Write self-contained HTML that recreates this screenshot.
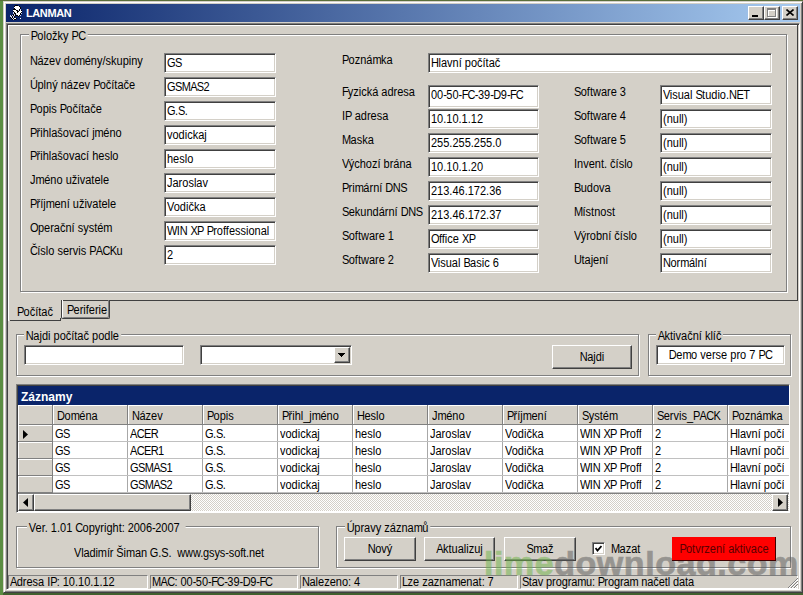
<!DOCTYPE html><html><head><meta charset="utf-8"><style>
html,body{margin:0;padding:0}
body{width:803px;height:595px;position:relative;overflow:hidden;background:#5B8D42;font-family:"Liberation Sans",sans-serif;font-size:11px;color:#000}
body div{position:absolute;box-sizing:border-box}
.t{white-space:nowrap;line-height:13px;height:13px;font-size:12px;transform:scaleX(0.917);transform-origin:0 0}
.tc{transform-origin:50% 0}
.sk{border:1px solid;border-color:#808080 #fff #fff #808080;box-shadow:inset 1px 1px #404040,inset -1px -1px #D4D0C8}
.rs{border:1px solid;border-color:#fff #404040 #404040 #fff;box-shadow:inset -1px -1px #808080}
.gb{border:1px solid #808080;box-shadow:inset 1px 1px #fff,1px 1px #fff}
.gc{background:#D4D0C8}
.b{font-weight:bold}
</style></head><body>
<div style="left:0px;top:0px;width:803px;height:1px;background:#5a6e3a"></div>
<div style="left:3px;top:1px;width:800px;height:592px;background:#D4D0C8;border:1px solid;border-color:#D4D0C8 #404040 #404040 #D4D0C8;box-shadow:inset 1px 1px #fff,inset -1px -1px #808080"></div>
<div style="left:3px;top:593px;width:800px;height:2px;background:#41602f"></div>
<div style="left:6px;top:4px;width:794px;height:18px;background:linear-gradient(to right,#0A246A,#A6CAF0)"></div>
<div class="t" style="left:26px;top:7px;color:#fff;font-weight:bold;letter-spacing:-0.4px;font-size:11px;transform:none">LANMAN</div>
<div class="rs" style="left:748px;top:6px;width:16px;height:14px;background:#D4D0C8"></div>
<div class="rs" style="left:764px;top:6px;width:16px;height:14px;background:#D4D0C8"></div>
<div class="rs" style="left:782px;top:6px;width:16px;height:14px;background:#D4D0C8"></div>
<div style="left:752px;top:15px;width:6px;height:2px;background:#000"></div>
<div style="left:768px;top:9px;width:9px;height:9px;border:1px solid #fff;border-top-width:2px"></div>
<div style="left:767px;top:8px;width:9px;height:9px;border:1px solid #808080;border-top-width:2px"></div>
<svg style="position:absolute;left:786px;top:9px" width="8" height="7" viewBox="0 0 8 7"><path d="M0.5 0.5L7.5 6.5M7.5 0.5L0.5 6.5" stroke="#000" stroke-width="1.6"/></svg>
<svg style="position:absolute;left:10px;top:5px" width="13" height="15" viewBox="0 0 13 15" shape-rendering="crispEdges"><rect x="5" y="0" width="1" height="1" fill="#000"/><rect x="6" y="0" width="1" height="1" fill="#000"/><rect x="7" y="0" width="1" height="1" fill="#000"/><rect x="4" y="1" width="1" height="1" fill="#000"/><rect x="5" y="1" width="1" height="1" fill="#fff"/><rect x="6" y="1" width="1" height="1" fill="#fff"/><rect x="7" y="1" width="1" height="1" fill="#fff"/><rect x="8" y="1" width="1" height="1" fill="#fff"/><rect x="9" y="1" width="1" height="1" fill="#000"/><rect x="4" y="2" width="1" height="1" fill="#fff"/><rect x="5" y="2" width="1" height="1" fill="#fff"/><rect x="6" y="2" width="1" height="1" fill="#fff"/><rect x="7" y="2" width="1" height="1" fill="#fff"/><rect x="8" y="2" width="1" height="1" fill="#fff"/><rect x="9" y="2" width="1" height="1" fill="#fff"/><rect x="10" y="2" width="1" height="1" fill="#000"/><rect x="4" y="3" width="1" height="1" fill="#000"/><rect x="5" y="3" width="1" height="1" fill="#fff"/><rect x="6" y="3" width="1" height="1" fill="#fff"/><rect x="7" y="3" width="1" height="1" fill="#fff"/><rect x="8" y="3" width="1" height="1" fill="#fff"/><rect x="9" y="3" width="1" height="1" fill="#fff"/><rect x="10" y="3" width="1" height="1" fill="#000"/><rect x="3" y="4" width="1" height="1" fill="#000"/><rect x="4" y="4" width="1" height="1" fill="#000"/><rect x="5" y="4" width="1" height="1" fill="#000"/><rect x="6" y="4" width="1" height="1" fill="#fff"/><rect x="7" y="4" width="1" height="1" fill="#fff"/><rect x="8" y="4" width="1" height="1" fill="#fff"/><rect x="9" y="4" width="1" height="1" fill="#000"/><rect x="10" y="4" width="1" height="1" fill="#c8d0f8"/><rect x="3" y="5" width="1" height="1" fill="#fff"/><rect x="4" y="5" width="1" height="1" fill="#fff"/><rect x="5" y="5" width="1" height="1" fill="#fff"/><rect x="6" y="5" width="1" height="1" fill="#000"/><rect x="7" y="5" width="1" height="1" fill="#000"/><rect x="8" y="5" width="1" height="1" fill="#c8d0f8"/><rect x="9" y="5" width="1" height="1" fill="#000"/><rect x="10" y="5" width="1" height="1" fill="#fff"/><rect x="11" y="5" width="1" height="1" fill="#000"/><rect x="3" y="6" width="1" height="1" fill="#000"/><rect x="4" y="6" width="1" height="1" fill="#fff"/><rect x="5" y="6" width="1" height="1" fill="#fff"/><rect x="6" y="6" width="1" height="1" fill="#fff"/><rect x="7" y="6" width="1" height="1" fill="#000"/><rect x="8" y="6" width="1" height="1" fill="#000"/><rect x="9" y="6" width="1" height="1" fill="#fff"/><rect x="10" y="6" width="1" height="1" fill="#fff"/><rect x="11" y="6" width="1" height="1" fill="#fff"/><rect x="3" y="7" width="1" height="1" fill="#c8d0f8"/><rect x="4" y="7" width="1" height="1" fill="#000"/><rect x="5" y="7" width="1" height="1" fill="#fff"/><rect x="6" y="7" width="1" height="1" fill="#fff"/><rect x="7" y="7" width="1" height="1" fill="#000"/><rect x="8" y="7" width="1" height="1" fill="#fff"/><rect x="9" y="7" width="1" height="1" fill="#fff"/><rect x="10" y="7" width="1" height="1" fill="#fff"/><rect x="11" y="7" width="1" height="1" fill="#000"/><rect x="3" y="8" width="1" height="1" fill="#c8d0f8"/><rect x="4" y="8" width="1" height="1" fill="#000"/><rect x="5" y="8" width="1" height="1" fill="#000"/><rect x="6" y="8" width="1" height="1" fill="#fff"/><rect x="7" y="8" width="1" height="1" fill="#fff"/><rect x="8" y="8" width="1" height="1" fill="#fff"/><rect x="9" y="8" width="1" height="1" fill="#fff"/><rect x="10" y="8" width="1" height="1" fill="#000"/><rect x="11" y="8" width="1" height="1" fill="#c8d0f8"/><rect x="3" y="9" width="1" height="1" fill="#000"/><rect x="4" y="9" width="1" height="1" fill="#c8d0f8"/><rect x="5" y="9" width="1" height="1" fill="#000"/><rect x="6" y="9" width="1" height="1" fill="#c8d0f8"/><rect x="7" y="9" width="1" height="1" fill="#fff"/><rect x="8" y="9" width="1" height="1" fill="#fff"/><rect x="9" y="9" width="1" height="1" fill="#fff"/><rect x="10" y="9" width="1" height="1" fill="#000"/><rect x="0" y="10" width="1" height="1" fill="#c8d0f8"/><rect x="1" y="10" width="1" height="1" fill="#000"/><rect x="2" y="10" width="1" height="1" fill="#c8d0f8"/><rect x="3" y="10" width="1" height="1" fill="#000"/><rect x="4" y="10" width="1" height="1" fill="#c8d0f8"/><rect x="5" y="10" width="1" height="1" fill="#000"/><rect x="6" y="10" width="1" height="1" fill="#000"/><rect x="7" y="10" width="1" height="1" fill="#000"/><rect x="8" y="10" width="1" height="1" fill="#fff"/><rect x="9" y="10" width="1" height="1" fill="#000"/><rect x="10" y="10" width="1" height="1" fill="#c8d0f8"/><rect x="0" y="11" width="1" height="1" fill="#c8d0f8"/><rect x="1" y="11" width="1" height="1" fill="#c8d0f8"/><rect x="2" y="11" width="1" height="1" fill="#000"/><rect x="3" y="11" width="1" height="1" fill="#c8d0f8"/><rect x="4" y="11" width="1" height="1" fill="#000"/><rect x="8" y="11" width="1" height="1" fill="#000"/><rect x="0" y="12" width="1" height="1" fill="#000"/><rect x="1" y="12" width="1" height="1" fill="#c8d0f8"/><rect x="2" y="12" width="1" height="1" fill="#000"/><rect x="3" y="12" width="1" height="1" fill="#c8d0f8"/><rect x="4" y="12" width="1" height="1" fill="#000"/><rect x="1" y="13" width="1" height="1" fill="#000"/><rect x="2" y="13" width="1" height="1" fill="#c8d0f8"/><rect x="3" y="13" width="1" height="1" fill="#000"/><rect x="4" y="13" width="1" height="1" fill="#fff"/><rect x="5" y="13" width="1" height="1" fill="#fff"/><rect x="6" y="13" width="1" height="1" fill="#000"/><rect x="10" y="13" width="1" height="1" fill="#fff"/><rect x="2" y="14" width="1" height="1" fill="#000"/><rect x="3" y="14" width="1" height="1" fill="#c8d0f8"/><rect x="4" y="14" width="1" height="1" fill="#000"/><rect x="5" y="14" width="1" height="1" fill="#000"/></svg>
<div class="sk" style="left:6px;top:23px;width:794px;height:567px;background:#D4D0C8"></div>
<div style="left:8px;top:25px;width:790px;height:1px;background:#fff"></div>
<div style="left:8px;top:25px;width:1px;height:296px;background:#fff"></div>
<div style="left:797px;top:25px;width:1px;height:276px;background:#404040"></div>
<div style="left:61px;top:300px;width:737px;height:1px;background:#404040"></div>
<div class="gb" style="left:20px;top:34px;width:767px;height:258px"></div>
<div class="t gc" style="left:29px;top:30px;padding:0 2px;"><span style="letter-spacing:-0.9px">P</span>oložky <span style="letter-spacing:-0.9px">P</span><span style="letter-spacing:-0.7px">C</span></div>
<div class="t" style="left:30px;top:55px;"><span style="letter-spacing:-0.5px">N</span>ázev do<span style="letter-spacing:-0.5px">m</span>ény/skupiny</div>
<div class="sk" style="left:164px;top:53px;width:112px;height:20px;background:#fff"></div>
<div class="t" style="left:167px;top:57px;"><span style="letter-spacing:-0.7px">G</span><span style="letter-spacing:-0.7px">S</span></div>
<div class="t" style="left:30px;top:79px;"><span style="letter-spacing:-0.5px">Ú</span>plný název <span style="letter-spacing:-0.9px">P</span>očítače</div>
<div class="sk" style="left:164px;top:77px;width:112px;height:20px;background:#fff"></div>
<div class="t" style="left:167px;top:81px;"><span style="letter-spacing:-0.7px">G</span><span style="letter-spacing:-0.7px">S</span><span style="letter-spacing:-0.7px">M</span><span style="letter-spacing:-0.7px">A</span><span style="letter-spacing:-0.7px">S</span>2</div>
<div class="t" style="left:30px;top:103px;"><span style="letter-spacing:-0.9px">P</span>opis <span style="letter-spacing:-0.9px">P</span>očítače</div>
<div class="sk" style="left:164px;top:101px;width:112px;height:20px;background:#fff"></div>
<div class="t" style="left:167px;top:105px;"><span style="letter-spacing:-0.7px">G</span>.<span style="letter-spacing:-0.7px">S</span>.</div>
<div class="t" style="left:30px;top:127px;"><span style="letter-spacing:-0.9px">P</span>řihlašovací j<span style="letter-spacing:-0.5px">m</span>éno</div>
<div class="sk" style="left:164px;top:125px;width:112px;height:20px;background:#fff"></div>
<div class="t" style="left:167px;top:129px;">vodickaj</div>
<div class="t" style="left:30px;top:150px;"><span style="letter-spacing:-0.9px">P</span>řihlašovací heslo</div>
<div class="sk" style="left:164px;top:149px;width:112px;height:20px;background:#fff"></div>
<div class="t" style="left:167px;top:153px;">heslo</div>
<div class="t" style="left:30px;top:174px;">J<span style="letter-spacing:-0.5px">m</span>éno uživatele</div>
<div class="sk" style="left:164px;top:173px;width:112px;height:20px;background:#fff"></div>
<div class="t" style="left:167px;top:177px;">Jaroslav</div>
<div class="t" style="left:30px;top:198px;"><span style="letter-spacing:-0.9px">P</span>říj<span style="letter-spacing:-0.5px">m</span>ení uživatele</div>
<div class="sk" style="left:164px;top:197px;width:112px;height:20px;background:#fff"></div>
<div class="t" style="left:167px;top:201px;"><span style="letter-spacing:-0.7px">V</span>odička</div>
<div class="t" style="left:30px;top:222px;"><span style="letter-spacing:-0.7px">O</span>perační systé<span style="letter-spacing:-0.5px">m</span></div>
<div class="sk" style="left:164px;top:221px;width:112px;height:20px;background:#fff"></div>
<div class="t" style="left:167px;top:225px;"><span style="letter-spacing:-0.7px">W</span>I<span style="letter-spacing:-0.5px">N</span> <span style="letter-spacing:-0.7px">X</span><span style="letter-spacing:-0.9px">P</span> <span style="letter-spacing:-0.9px">P</span>roffessional</div>
<div class="t" style="left:30px;top:245px;"><span style="letter-spacing:-0.7px">Č</span>íslo servis <span style="letter-spacing:-0.9px">P</span><span style="letter-spacing:-0.7px">A</span><span style="letter-spacing:-0.7px">C</span><span style="letter-spacing:-0.7px">K</span>u</div>
<div class="sk" style="left:164px;top:245px;width:112px;height:20px;background:#fff"></div>
<div class="t" style="left:167px;top:249px;">2</div>
<div class="t" style="left:342px;top:54px;"><span style="letter-spacing:-0.9px">P</span>ozná<span style="letter-spacing:-0.5px">m</span>ka</div>
<div class="sk" style="left:428px;top:53px;width:344px;height:20px;background:#fff"></div>
<div class="t" style="left:431px;top:57px;"><span style="letter-spacing:-0.5px">H</span>lavní počítač</div>
<div class="t" style="left:342px;top:86px;"><span style="letter-spacing:-1.1px">F</span>yzická adresa</div>
<div class="sk" style="left:428px;top:85px;width:111px;height:23px;background:#fff"></div>
<div class="t" style="left:431px;top:89px;">00<span style="letter-spacing:-0.6px">-</span>50<span style="letter-spacing:-0.6px">-</span><span style="letter-spacing:-1.1px">F</span><span style="letter-spacing:-0.7px">C</span><span style="letter-spacing:-0.6px">-</span>39<span style="letter-spacing:-0.6px">-</span><span style="letter-spacing:-0.5px">D</span>9<span style="letter-spacing:-0.6px">-</span><span style="letter-spacing:-1.1px">F</span><span style="letter-spacing:-0.7px">C</span></div>
<div class="t" style="left:342px;top:110px;">I<span style="letter-spacing:-0.9px">P</span> adresa</div>
<div class="sk" style="left:428px;top:109px;width:111px;height:20px;background:#fff"></div>
<div class="t" style="left:431px;top:113px;">10.10.1.12</div>
<div class="t" style="left:342px;top:134px;"><span style="letter-spacing:-0.7px">M</span>aska</div>
<div class="sk" style="left:428px;top:133px;width:111px;height:20px;background:#fff"></div>
<div class="t" style="left:431px;top:137px;">255.255.255.0</div>
<div class="t" style="left:342px;top:158px;"><span style="letter-spacing:-0.7px">V</span>ýchozí brána</div>
<div class="sk" style="left:428px;top:157px;width:111px;height:20px;background:#fff"></div>
<div class="t" style="left:431px;top:161px;">10.10.1.20</div>
<div class="t" style="left:342px;top:182px;"><span style="letter-spacing:-0.9px">P</span>ri<span style="letter-spacing:-0.5px">m</span>ární <span style="letter-spacing:-0.5px">D</span><span style="letter-spacing:-0.5px">N</span><span style="letter-spacing:-0.7px">S</span></div>
<div class="sk" style="left:428px;top:181px;width:111px;height:20px;background:#fff"></div>
<div class="t" style="left:431px;top:185px;">213.46.172.36</div>
<div class="t" style="left:342px;top:206px;"><span style="letter-spacing:-0.7px">S</span>ekundární <span style="letter-spacing:-0.5px">D</span><span style="letter-spacing:-0.5px">N</span><span style="letter-spacing:-0.7px">S</span></div>
<div class="sk" style="left:428px;top:205px;width:111px;height:20px;background:#fff"></div>
<div class="t" style="left:431px;top:209px;">213.46.172.37</div>
<div class="t" style="left:342px;top:230px;"><span style="letter-spacing:-0.7px">S</span>oftware 1</div>
<div class="sk" style="left:428px;top:229px;width:111px;height:20px;background:#fff"></div>
<div class="t" style="left:431px;top:233px;"><span style="letter-spacing:-0.7px">O</span>ffice <span style="letter-spacing:-0.7px">X</span><span style="letter-spacing:-0.9px">P</span></div>
<div class="t" style="left:342px;top:254px;"><span style="letter-spacing:-0.7px">S</span>oftware 2</div>
<div class="sk" style="left:428px;top:253px;width:111px;height:20px;background:#fff"></div>
<div class="t" style="left:431px;top:257px;"><span style="letter-spacing:-0.7px">V</span>isual <span style="letter-spacing:-0.7px">B</span>asic 6</div>
<div class="t" style="left:574px;top:86px;"><span style="letter-spacing:-0.7px">S</span>oftware 3</div>
<div class="sk" style="left:660px;top:85px;width:112px;height:20px;background:#fff"></div>
<div class="t" style="left:663px;top:89px;"><span style="letter-spacing:-0.7px">V</span>isual <span style="letter-spacing:-0.7px">S</span>tudio.<span style="letter-spacing:-0.5px">N</span><span style="letter-spacing:-0.7px">E</span><span style="letter-spacing:-0.4px">T</span></div>
<div class="t" style="left:574px;top:110px;"><span style="letter-spacing:-0.7px">S</span>oftware 4</div>
<div class="sk" style="left:660px;top:109px;width:112px;height:20px;background:#fff"></div>
<div class="t" style="left:663px;top:113px;">(null)</div>
<div class="t" style="left:574px;top:134px;"><span style="letter-spacing:-0.7px">S</span>oftware 5</div>
<div class="sk" style="left:660px;top:133px;width:112px;height:20px;background:#fff"></div>
<div class="t" style="left:663px;top:137px;">(null)</div>
<div class="t" style="left:574px;top:158px;">Invent. číslo</div>
<div class="sk" style="left:660px;top:157px;width:112px;height:20px;background:#fff"></div>
<div class="t" style="left:663px;top:161px;">(null)</div>
<div class="t" style="left:574px;top:182px;"><span style="letter-spacing:-0.7px">B</span>udova</div>
<div class="sk" style="left:660px;top:181px;width:112px;height:20px;background:#fff"></div>
<div class="t" style="left:663px;top:185px;">(null)</div>
<div class="t" style="left:574px;top:206px;"><span style="letter-spacing:-0.7px">M</span>ístnost</div>
<div class="sk" style="left:660px;top:205px;width:112px;height:20px;background:#fff"></div>
<div class="t" style="left:663px;top:209px;">(null)</div>
<div class="t" style="left:574px;top:230px;"><span style="letter-spacing:-0.7px">V</span>ýrobní číslo</div>
<div class="sk" style="left:660px;top:229px;width:112px;height:20px;background:#fff"></div>
<div class="t" style="left:663px;top:233px;">(null)</div>
<div class="t" style="left:574px;top:254px;"><span style="letter-spacing:-0.5px">U</span>tajení</div>
<div class="sk" style="left:660px;top:253px;width:112px;height:20px;background:#fff"></div>
<div class="t" style="left:663px;top:257px;"><span style="letter-spacing:-0.5px">N</span>or<span style="letter-spacing:-0.5px">m</span>ální</div>
<div style="left:10px;top:320px;width:51px;height:1px;background:#404040"></div>
<div style="left:60px;top:318px;width:1px;height:3px;background:#404040"></div>
<div style="left:61px;top:300px;width:49px;height:19px;border:1px solid #404040;border-top:none;box-shadow:inset 1px 0 #fff,inset -1px -1px #808080;border-radius:0 0 2px 2px"></div>
<div class="t" style="left:17px;top:306px;"><span style="letter-spacing:-0.9px">P</span>očítač</div>
<div class="t" style="left:67px;top:304px;"><span style="letter-spacing:-0.9px">P</span>eriferie</div>
<div class="gb" style="left:16px;top:334px;width:623px;height:42px"></div>
<div class="t gc" style="left:24px;top:330px;padding:0 2px;"><span style="letter-spacing:-0.5px">N</span>ajdi počítač podle</div>
<div class="sk" style="left:24px;top:345px;width:160px;height:20px;background:#fff"></div>
<div class="sk" style="left:200px;top:345px;width:152px;height:20px;background:#fff"></div>
<div class="rs" style="left:334px;top:347px;width:16px;height:16px;background:#D4D0C8"></div>
<svg style="position:absolute;left:338px;top:353px" width="7" height="4" viewBox="0 0 7 4" shape-rendering="crispEdges"><path d="M0 0h7v1h-1v1h-1v1h-1v1h-1v-1h-1v-1h-1v-1h-1z" fill="#000"/></svg>
<div class="rs" style="left:552px;top:345px;width:80px;height:24px;background:#D4D0C8"></div>
<div class="t tc" style="left:552px;width:80px;text-align:center;top:351px;color:#000"><span style="letter-spacing:-0.5px">N</span>ajdi</div>
<div class="gb" style="left:648px;top:334px;width:143px;height:42px"></div>
<div class="t gc" style="left:656px;top:330px;padding:0 2px;"><span style="letter-spacing:-0.7px">A</span>ktivační klíč</div>
<div class="sk" style="left:656px;top:345px;width:129px;height:20px;background:#fff"></div>
<div class="t tc" style="left:656px;width:129px;text-align:center;top:349px"><span style="letter-spacing:-0.5px">D</span>e<span style="letter-spacing:-0.5px">m</span>o verse pro 7 <span style="letter-spacing:-0.9px">P</span><span style="letter-spacing:-0.7px">C</span></div>
<div style="left:16px;top:384px;width:774px;height:129px;border:1px solid;border-color:#808080 #fff #fff #808080;box-shadow:inset 1px 1px #404040;background:#fff"></div>
<div style="left:18px;top:386px;width:771px;height:19px;background:#0A246A"></div>
<div class="t" style="left:21px;top:390px;color:#fff;font-weight:bold;font-size:12px;line-height:14px;height:14px;transform:none">Záznamy</div>
<div style="left:18px;top:405px;width:771px;height:20px;background:#D4D0C8"></div>
<div style="left:18px;top:405px;width:771px;height:1px;background:#fff"></div>
<div style="left:18px;top:424px;width:771px;height:1px;background:#808080"></div>
<div style="left:52px;top:405px;width:1px;height:20px;background:#808080"></div>
<div style="left:52px;top:425px;width:1px;height:68px;background:#808080"></div>
<div style="left:53px;top:406px;width:1px;height:18px;background:#fff"></div>
<div style="left:127px;top:405px;width:1px;height:20px;background:#808080"></div>
<div style="left:127px;top:425px;width:1px;height:68px;background:#A8A8A8"></div>
<div style="left:128px;top:406px;width:1px;height:18px;background:#fff"></div>
<div style="left:202px;top:405px;width:1px;height:20px;background:#808080"></div>
<div style="left:202px;top:425px;width:1px;height:68px;background:#A8A8A8"></div>
<div style="left:203px;top:406px;width:1px;height:18px;background:#fff"></div>
<div style="left:277px;top:405px;width:1px;height:20px;background:#808080"></div>
<div style="left:277px;top:425px;width:1px;height:68px;background:#A8A8A8"></div>
<div style="left:278px;top:406px;width:1px;height:18px;background:#fff"></div>
<div style="left:352px;top:405px;width:1px;height:20px;background:#808080"></div>
<div style="left:352px;top:425px;width:1px;height:68px;background:#A8A8A8"></div>
<div style="left:353px;top:406px;width:1px;height:18px;background:#fff"></div>
<div style="left:427px;top:405px;width:1px;height:20px;background:#808080"></div>
<div style="left:427px;top:425px;width:1px;height:68px;background:#A8A8A8"></div>
<div style="left:428px;top:406px;width:1px;height:18px;background:#fff"></div>
<div style="left:502px;top:405px;width:1px;height:20px;background:#808080"></div>
<div style="left:502px;top:425px;width:1px;height:68px;background:#A8A8A8"></div>
<div style="left:503px;top:406px;width:1px;height:18px;background:#fff"></div>
<div style="left:577px;top:405px;width:1px;height:20px;background:#808080"></div>
<div style="left:577px;top:425px;width:1px;height:68px;background:#A8A8A8"></div>
<div style="left:578px;top:406px;width:1px;height:18px;background:#fff"></div>
<div style="left:652px;top:405px;width:1px;height:20px;background:#808080"></div>
<div style="left:652px;top:425px;width:1px;height:68px;background:#A8A8A8"></div>
<div style="left:653px;top:406px;width:1px;height:18px;background:#fff"></div>
<div style="left:727px;top:405px;width:1px;height:20px;background:#808080"></div>
<div style="left:727px;top:425px;width:1px;height:68px;background:#A8A8A8"></div>
<div style="left:728px;top:406px;width:1px;height:18px;background:#fff"></div>
<div style="left:18px;top:405px;width:1px;height:88px;background:#fff"></div>
<div class="t" style="left:57px;top:410px;"><span style="letter-spacing:-0.5px">D</span>o<span style="letter-spacing:-0.5px">m</span>éna</div>
<div class="t" style="left:132px;top:410px;"><span style="letter-spacing:-0.5px">N</span>ázev</div>
<div class="t" style="left:207px;top:410px;"><span style="letter-spacing:-0.9px">P</span>opis</div>
<div class="t" style="left:282px;top:410px;"><span style="letter-spacing:-0.9px">P</span>řihl_j<span style="letter-spacing:-0.5px">m</span>éno</div>
<div class="t" style="left:357px;top:410px;"><span style="letter-spacing:-0.5px">H</span>eslo</div>
<div class="t" style="left:432px;top:410px;">J<span style="letter-spacing:-0.5px">m</span>éno</div>
<div class="t" style="left:507px;top:410px;"><span style="letter-spacing:-0.9px">P</span>říj<span style="letter-spacing:-0.5px">m</span>ení</div>
<div class="t" style="left:582px;top:410px;"><span style="letter-spacing:-0.7px">S</span>ysté<span style="letter-spacing:-0.5px">m</span></div>
<div class="t" style="left:657px;top:410px;"><span style="letter-spacing:-0.7px">S</span>ervis_<span style="letter-spacing:-0.9px">P</span><span style="letter-spacing:-0.7px">A</span><span style="letter-spacing:-0.7px">C</span><span style="letter-spacing:-0.7px">K</span></div>
<div class="t" style="left:732px;top:410px;"><span style="letter-spacing:-0.9px">P</span>ozná<span style="letter-spacing:-0.5px">m</span>ka</div>
<div style="left:18px;top:425px;width:34px;height:16px;background:#D4D0C8;border-top:1px solid #fff"></div>
<div style="left:18px;top:425px;width:1px;height:16px;background:#fff"></div>
<div style="left:18px;top:441px;width:34px;height:1px;background:#808080"></div>
<div style="left:53px;top:441px;width:736px;height:1px;background:#C0C0C0"></div>
<div class="t" style="left:55px;top:428px;width:77.4px;overflow:hidden"><span style="letter-spacing:-0.7px">G</span><span style="letter-spacing:-0.7px">S</span></div>
<div class="t" style="left:130px;top:428px;width:77.4px;overflow:hidden"><span style="letter-spacing:-0.7px">A</span><span style="letter-spacing:-0.7px">C</span><span style="letter-spacing:-0.7px">E</span><span style="letter-spacing:-0.7px">R</span></div>
<div class="t" style="left:205px;top:428px;width:77.4px;overflow:hidden"><span style="letter-spacing:-0.7px">G</span>.<span style="letter-spacing:-0.7px">S</span>.</div>
<div class="t" style="left:280px;top:428px;width:77.4px;overflow:hidden">vodickaj</div>
<div class="t" style="left:355px;top:428px;width:77.4px;overflow:hidden">heslo</div>
<div class="t" style="left:430px;top:428px;width:77.4px;overflow:hidden">Jaroslav</div>
<div class="t" style="left:505px;top:428px;width:77.4px;overflow:hidden"><span style="letter-spacing:-0.7px">V</span>odička</div>
<div class="t" style="left:580px;top:428px;width:66.5px;overflow:hidden"><span style="letter-spacing:-0.7px">W</span>I<span style="letter-spacing:-0.5px">N</span> <span style="letter-spacing:-0.7px">X</span><span style="letter-spacing:-0.9px">P</span> <span style="letter-spacing:-0.9px">P</span>roffessional</div>
<div class="t" style="left:655px;top:428px;width:77.4px;overflow:hidden">2</div>
<div class="t" style="left:730px;top:428px;width:58.9px;overflow:hidden"><span style="letter-spacing:-0.5px">H</span>lavní počítač</div>
<div style="left:18px;top:442px;width:34px;height:16px;background:#D4D0C8;border-top:1px solid #fff"></div>
<div style="left:18px;top:442px;width:1px;height:16px;background:#fff"></div>
<div style="left:18px;top:458px;width:34px;height:1px;background:#808080"></div>
<div style="left:53px;top:458px;width:736px;height:1px;background:#C0C0C0"></div>
<div class="t" style="left:55px;top:445px;width:77.4px;overflow:hidden"><span style="letter-spacing:-0.7px">G</span><span style="letter-spacing:-0.7px">S</span></div>
<div class="t" style="left:130px;top:445px;width:77.4px;overflow:hidden"><span style="letter-spacing:-0.7px">A</span><span style="letter-spacing:-0.7px">C</span><span style="letter-spacing:-0.7px">E</span><span style="letter-spacing:-0.7px">R</span>1</div>
<div class="t" style="left:205px;top:445px;width:77.4px;overflow:hidden"><span style="letter-spacing:-0.7px">G</span>.<span style="letter-spacing:-0.7px">S</span>.</div>
<div class="t" style="left:280px;top:445px;width:77.4px;overflow:hidden">vodickaj</div>
<div class="t" style="left:355px;top:445px;width:77.4px;overflow:hidden">heslo</div>
<div class="t" style="left:430px;top:445px;width:77.4px;overflow:hidden">Jaroslav</div>
<div class="t" style="left:505px;top:445px;width:77.4px;overflow:hidden"><span style="letter-spacing:-0.7px">V</span>odička</div>
<div class="t" style="left:580px;top:445px;width:66.5px;overflow:hidden"><span style="letter-spacing:-0.7px">W</span>I<span style="letter-spacing:-0.5px">N</span> <span style="letter-spacing:-0.7px">X</span><span style="letter-spacing:-0.9px">P</span> <span style="letter-spacing:-0.9px">P</span>roffessional</div>
<div class="t" style="left:655px;top:445px;width:77.4px;overflow:hidden">2</div>
<div class="t" style="left:730px;top:445px;width:58.9px;overflow:hidden"><span style="letter-spacing:-0.5px">H</span>lavní počítač</div>
<div style="left:18px;top:459px;width:34px;height:16px;background:#D4D0C8;border-top:1px solid #fff"></div>
<div style="left:18px;top:459px;width:1px;height:16px;background:#fff"></div>
<div style="left:18px;top:475px;width:34px;height:1px;background:#808080"></div>
<div style="left:53px;top:475px;width:736px;height:1px;background:#C0C0C0"></div>
<div class="t" style="left:55px;top:462px;width:77.4px;overflow:hidden"><span style="letter-spacing:-0.7px">G</span><span style="letter-spacing:-0.7px">S</span></div>
<div class="t" style="left:130px;top:462px;width:77.4px;overflow:hidden"><span style="letter-spacing:-0.7px">G</span><span style="letter-spacing:-0.7px">S</span><span style="letter-spacing:-0.7px">M</span><span style="letter-spacing:-0.7px">A</span><span style="letter-spacing:-0.7px">S</span>1</div>
<div class="t" style="left:205px;top:462px;width:77.4px;overflow:hidden"><span style="letter-spacing:-0.7px">G</span>.<span style="letter-spacing:-0.7px">S</span>.</div>
<div class="t" style="left:280px;top:462px;width:77.4px;overflow:hidden">vodickaj</div>
<div class="t" style="left:355px;top:462px;width:77.4px;overflow:hidden">heslo</div>
<div class="t" style="left:430px;top:462px;width:77.4px;overflow:hidden">Jaroslav</div>
<div class="t" style="left:505px;top:462px;width:77.4px;overflow:hidden"><span style="letter-spacing:-0.7px">V</span>odička</div>
<div class="t" style="left:580px;top:462px;width:66.5px;overflow:hidden"><span style="letter-spacing:-0.7px">W</span>I<span style="letter-spacing:-0.5px">N</span> <span style="letter-spacing:-0.7px">X</span><span style="letter-spacing:-0.9px">P</span> <span style="letter-spacing:-0.9px">P</span>roffessional</div>
<div class="t" style="left:655px;top:462px;width:77.4px;overflow:hidden">2</div>
<div class="t" style="left:730px;top:462px;width:58.9px;overflow:hidden"><span style="letter-spacing:-0.5px">H</span>lavní počítač</div>
<div style="left:18px;top:476px;width:34px;height:16px;background:#D4D0C8;border-top:1px solid #fff"></div>
<div style="left:18px;top:476px;width:1px;height:16px;background:#fff"></div>
<div style="left:18px;top:492px;width:34px;height:1px;background:#808080"></div>
<div style="left:53px;top:492px;width:736px;height:1px;background:#C0C0C0"></div>
<div class="t" style="left:55px;top:479px;width:77.4px;overflow:hidden"><span style="letter-spacing:-0.7px">G</span><span style="letter-spacing:-0.7px">S</span></div>
<div class="t" style="left:130px;top:479px;width:77.4px;overflow:hidden"><span style="letter-spacing:-0.7px">G</span><span style="letter-spacing:-0.7px">S</span><span style="letter-spacing:-0.7px">M</span><span style="letter-spacing:-0.7px">A</span><span style="letter-spacing:-0.7px">S</span>2</div>
<div class="t" style="left:205px;top:479px;width:77.4px;overflow:hidden"><span style="letter-spacing:-0.7px">G</span>.<span style="letter-spacing:-0.7px">S</span>.</div>
<div class="t" style="left:280px;top:479px;width:77.4px;overflow:hidden">vodickaj</div>
<div class="t" style="left:355px;top:479px;width:77.4px;overflow:hidden">heslo</div>
<div class="t" style="left:430px;top:479px;width:77.4px;overflow:hidden">Jaroslav</div>
<div class="t" style="left:505px;top:479px;width:77.4px;overflow:hidden"><span style="letter-spacing:-0.7px">V</span>odička</div>
<div class="t" style="left:580px;top:479px;width:66.5px;overflow:hidden"><span style="letter-spacing:-0.7px">W</span>I<span style="letter-spacing:-0.5px">N</span> <span style="letter-spacing:-0.7px">X</span><span style="letter-spacing:-0.9px">P</span> <span style="letter-spacing:-0.9px">P</span>roffessional</div>
<div class="t" style="left:655px;top:479px;width:77.4px;overflow:hidden">2</div>
<div class="t" style="left:730px;top:479px;width:58.9px;overflow:hidden"><span style="letter-spacing:-0.5px">H</span>lavní počítač</div>
<svg style="position:absolute;left:23px;top:430px" width="5" height="9" viewBox="0 0 5 9"><path d="M0 0L5 4.5L0 9z" fill="#000"/></svg>
<div style="left:18px;top:493px;width:771px;height:18px;background-color:#fff;background-image:linear-gradient(45deg,#D4D0C8 25%,transparent 25%,transparent 75%,#D4D0C8 75%),linear-gradient(45deg,#D4D0C8 25%,transparent 25%,transparent 75%,#D4D0C8 75%);background-size:2px 2px;background-position:0 0,1px 1px"></div>
<div style="left:18px;top:493px;width:771px;height:1px;background:#808080"></div>
<div class="rs" style="left:18px;top:494px;width:16px;height:17px;background:#D4D0C8"></div>
<svg style="position:absolute;left:23px;top:498px" width="5" height="9" viewBox="0 0 5 9"><path d="M5 0L0 4.5L5 9z" fill="#000"/></svg>
<div class="rs" style="left:34px;top:494px;width:157px;height:17px;background:#D4D0C8"></div>
<div class="rs" style="left:772px;top:494px;width:16px;height:17px;background:#D4D0C8"></div>
<svg style="position:absolute;left:778px;top:498px" width="5" height="9" viewBox="0 0 5 9"><path d="M0 0L5 4.5L0 9z" fill="#000"/></svg>
<div class="gb" style="left:16px;top:526px;width:303px;height:42px"></div>
<div class="t gc" style="left:27px;top:522px;padding:0 0 0 2px;width:173.4px;"><span style="letter-spacing:-0.7px">V</span>er. 1.01 <span style="letter-spacing:-0.7px">C</span>opyright<span style="letter-spacing:-0.3px">:</span> 2006<span style="letter-spacing:-0.6px">-</span>2007</div>
<div class="t" style="left:74px;top:547px;letter-spacing:-0.13px">Vladimír Šiman G.S.&nbsp; www.gsys-soft.net</div>
<div class="gb" style="left:336px;top:526px;width:455px;height:42px"></div>
<div class="t gc" style="left:345px;top:522px;padding:0 2px;"><span style="letter-spacing:-0.5px">Ú</span>pravy zázna<span style="letter-spacing:-0.5px">m</span>ů</div>
<div class="rs" style="left:344px;top:537px;width:72px;height:24px;background:#D4D0C8"></div>
<div class="t tc" style="left:344px;width:72px;text-align:center;top:543px;color:#000"><span style="letter-spacing:-0.5px">N</span>ový</div>
<div class="rs" style="left:424px;top:537px;width:71px;height:24px;background:#D4D0C8"></div>
<div class="t tc" style="left:424px;width:71px;text-align:center;top:543px;color:#000"><span style="letter-spacing:-0.7px">A</span>ktualizuj</div>
<div class="rs" style="left:504px;top:537px;width:72px;height:24px;background:#D4D0C8"></div>
<div class="t tc" style="left:504px;width:72px;text-align:center;top:543px;color:#000"><span style="letter-spacing:-0.7px">S</span><span style="letter-spacing:-0.5px">m</span>až</div>
<div class="sk" style="left:592px;top:542px;width:13px;height:13px;background:#fff"></div>
<svg style="position:absolute;left:595px;top:545px" width="7" height="7" viewBox="0 0 7 7"><path d="M0.5 3L2.5 5.5L6.5 1" stroke="#000" stroke-width="1.8" fill="none"/></svg>
<div class="t" style="left:611px;top:543px;"><span style="letter-spacing:-0.7px">M</span>azat</div>
<div style="left:8px;top:575px;width:140px;height:14px;border:1px solid;border-color:#808080 #fff #fff #808080"></div>
<div class="t" style="left:10px;top:576px;"><span style="letter-spacing:-0.7px">A</span>dresa I<span style="letter-spacing:-0.9px">P</span><span style="letter-spacing:-0.3px">:</span> 10.10.1.12</div>
<div style="left:150px;top:575px;width:148px;height:14px;border:1px solid;border-color:#808080 #fff #fff #808080"></div>
<div class="t" style="left:152px;top:576px;"><span style="letter-spacing:-0.7px">M</span><span style="letter-spacing:-0.7px">A</span><span style="letter-spacing:-0.7px">C</span><span style="letter-spacing:-0.3px">:</span> 00<span style="letter-spacing:-0.6px">-</span>50<span style="letter-spacing:-0.6px">-</span><span style="letter-spacing:-1.1px">F</span><span style="letter-spacing:-0.7px">C</span><span style="letter-spacing:-0.6px">-</span>39<span style="letter-spacing:-0.6px">-</span><span style="letter-spacing:-0.5px">D</span>9<span style="letter-spacing:-0.6px">-</span><span style="letter-spacing:-1.1px">F</span><span style="letter-spacing:-0.7px">C</span></div>
<div style="left:300px;top:575px;width:98px;height:14px;border:1px solid;border-color:#808080 #fff #fff #808080"></div>
<div class="t" style="left:302px;top:576px;"><span style="letter-spacing:-0.5px">N</span>alezeno<span style="letter-spacing:-0.3px">:</span> 4</div>
<div style="left:400px;top:575px;width:118px;height:14px;border:1px solid;border-color:#808080 #fff #fff #808080"></div>
<div class="t" style="left:402px;top:576px;"><span style="letter-spacing:-0.7px">L</span>ze zazna<span style="letter-spacing:-0.5px">m</span>enat<span style="letter-spacing:-0.3px">:</span> 7</div>
<div style="left:520px;top:575px;width:278px;height:14px;border:1px solid;border-color:#808080 #fff #fff #808080"></div>
<div class="t" style="left:522px;top:576px;letter-spacing:-0.1px"><span style="letter-spacing:-0.7px">S</span>tav progra<span style="letter-spacing:-0.5px">m</span>u<span style="letter-spacing:-0.3px">:</span> <span style="letter-spacing:-0.9px">P</span>rogra<span style="letter-spacing:-0.5px">m</span> načetl data</div>
<svg style="position:absolute;left:787px;top:577px" width="12" height="12" viewBox="0 0 12 12"><path d="M11 1L1 11M11 4L4 11M11 7L7 11" stroke="#808080" stroke-width="1"/><path d="M11 2L2 11M11 5L5 11M11 8L8 11" stroke="#fff" stroke-width="1"/></svg>
<div style="left:484px;top:543px;font-family:'Liberation Sans',sans-serif;font-weight:bold;font-size:34px;line-height:40px;white-space:nowrap;letter-spacing:0.55px;opacity:0.5;-webkit-text-stroke:0.7px currentColor"><span style="color:#6EB446">lime</span><span style="color:#5A5A5A">download.com</span></div>
<div style="left:672px;top:537px;width:104px;height:24px;background:#FF0000;border-bottom:1px solid #400000;border-right:1px solid #400000"></div>
<div class="t tc" style="left:672px;width:104px;text-align:center;top:543px;color:#5a0000"><span style="letter-spacing:-0.9px">P</span>otvrzení aktivace</div>
</body></html>
